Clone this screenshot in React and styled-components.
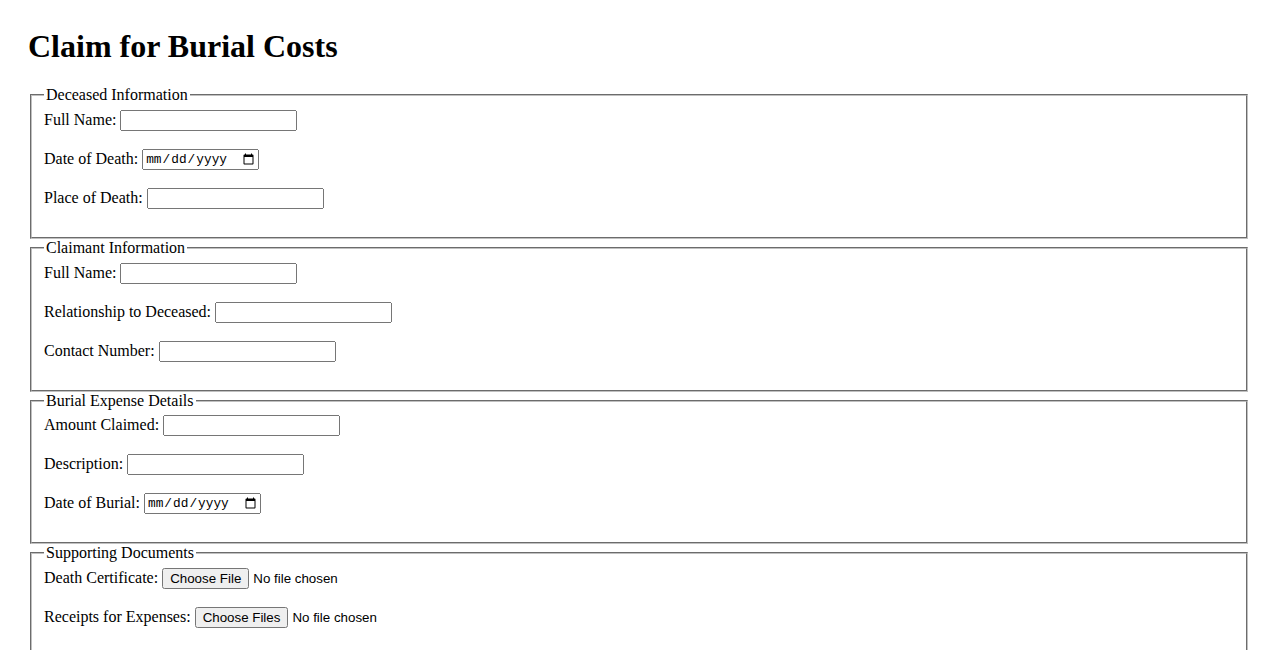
import React from 'react';
import styled, { createGlobalStyle } from 'styled-components';

const GlobalStyle = createGlobalStyle`
  body {
    margin: 0;
    padding: 28px;
    font-family: "Liberation Serif", "Times New Roman", serif;
    font-size: 16px;
    color: #000;
    background: #fff;
  }

  input {
    font-family: "Liberation Sans", Arial, sans-serif;
  }
`;

const Title = styled.h1`
  margin: 0 0 21.44px 0;
  font-size: 32px;
  font-weight: bold;
`;

const Form = styled.form`
  display: block;
`;

const Section = styled.fieldset`
  margin: 0 2px;
  padding: 0.35em 0.75em 0.625em;
  border: 2px groove rgb(192, 192, 192);
`;

const Legend = styled.legend`
  padding: 0 2px;
`;

const Label = styled.label`
  font-family: "Liberation Serif", "Times New Roman", serif;
`;

const TextInput = styled.input`
  box-sizing: border-box;
  width: 177px;
  height: 21px;
`;

const DateInput = styled.input`
  box-sizing: border-box;
  width: 117px;
  height: 21px;
  font-family: "Liberation Mono", "DejaVu Sans Mono", monospace;
  font-size: 12.8px;
  vertical-align: 1px;
`;

const FileInput = styled.input`
  font-size: 13.33px;
`;

const sections = [
  {
    title: 'Deceased Information',
    fields: [
      { id: 'deceasedName', label: 'Full Name:', type: 'text' },
      { id: 'dateOfDeath', label: 'Date of Death:', type: 'date' },
      { id: 'placeOfDeath', label: 'Place of Death:', type: 'text' },
    ],
  },
  {
    title: 'Claimant Information',
    fields: [
      { id: 'claimantName', label: 'Full Name:', type: 'text' },
      { id: 'relationship', label: 'Relationship to Deceased:', type: 'text' },
      { id: 'contactNumber', label: 'Contact Number:', type: 'tel' },
    ],
  },
  {
    title: 'Burial Expense Details',
    fields: [
      { id: 'amountClaimed', label: 'Amount Claimed:', type: 'text' },
      { id: 'description', label: 'Description:', type: 'text' },
      { id: 'dateOfBurial', label: 'Date of Burial:', type: 'date' },
    ],
  },
  {
    title: 'Supporting Documents',
    fields: [
      { id: 'deathCertificate', label: 'Death Certificate:', type: 'file' },
      { id: 'receipts', label: 'Receipts for Expenses:', type: 'file', multiple: true },
    ],
  },
];

const Field = ({ field }) => {
  const Input = field.type === 'date' ? DateInput : field.type === 'file' ? FileInput : TextInput;
  return (
    <>
      <Label htmlFor={field.id}>{field.label}</Label>{' '}
      <Input id={field.id} name={field.id} type={field.type} multiple={field.multiple} />
      <br />
      <br />
    </>
  );
};

const App = () => {
  return (
    <>
      <GlobalStyle />
      <Title>Claim for Burial Costs</Title>
      <Form onSubmit={(e) => e.preventDefault()}>
        {sections.map((section) => (
          <Section key={section.title}>
            <Legend>{section.title}</Legend>
            {section.fields.map((field) => (
              <Field key={field.id} field={field} />
            ))}
          </Section>
        ))}
      </Form>
    </>
  );
};

export default App;
